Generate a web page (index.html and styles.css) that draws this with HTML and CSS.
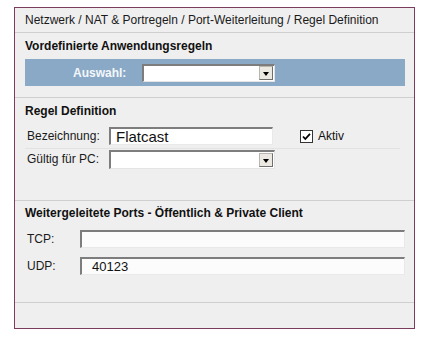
FILE: index.html
```html
<!DOCTYPE html>
<html lang="de">
<head>
    <meta charset="UTF-8">
    <link rel="stylesheet" href="styles.css">
    <title>Regel Definition</title>
</head>
<body>

    <div class="panel">
        <div class="crumb">Netzwerk / NAT &amp; Portregeln / Port-Weiterleitung / Regel Definition</div>

        <div class="section sec-preset">
            <h3>Vordefinierte Anwendungsregeln</h3>
            <div class="bar">
                <span class="bar-label">Auswahl:</span>
                <div class="select sel-preset"><span class="arrow"></span></div>
            </div>
        </div>

        <div class="section sec-rule">
            <h3>Regel Definition</h3>
            <div class="row row-name">
                <label class="lbl">Bezeichnung:</label>
                <div class="field field-name"><span class="val-big">Flatcast</span></div>
                <span class="check">
                    <svg width="11" height="11" viewBox="0 0 11 11"><path d="M2 5.5 L4.3 8 L9 2.8" fill="none" stroke="#000" stroke-width="1.8"/></svg>
                </span>
                <span class="check-label">Aktiv</span>
            </div>
            <div class="row">
                <label class="lbl">Gültig für PC:</label>
                <div class="select sel-pc"><span class="arrow"></span></div>
            </div>
        </div>

        <div class="section sec-ports">
            <h3>Weitergeleitete Ports - Öffentlich &amp; Private Client</h3>
            <div class="row row-port">
                <label class="lbl lbl-port">TCP:</label>
                <div class="field field-port"></div>
            </div>
            <div class="row row-port">
                <label class="lbl lbl-port">UDP:</label>
                <div class="field field-port field-udp"><span class="val">40123</span></div>
            </div>
        </div>

        <div class="section sec-end"></div>
    </div>

</body>
</html>
```

FILE: styles.css
```css
body {
    margin: 0;
    background-color: #fff;
    font-family: 'Liberation Sans', Arial, sans-serif;
    font-size: 12px;
    color: #111;
}

.panel {
    width: 399px;
    height: 320px;
    margin: 7px 0 0 14px;
    border: 1px solid #7b3c5e;
    background-color: #efefef;
}

.crumb {
    height: 24px;
    line-height: 24px;
    padding-left: 10px;
    border-bottom: 1px solid #cfcfcf;
    color: #1a1a1a;
}

.section {
    padding: 0 9px 0 10px;
    border-bottom: 1px solid #cfcfcf;
}

h3 {
    margin: 0;
    font-size: 12px;
    line-height: 14px;
    font-weight: bold;
}

.sec-preset {
    padding-top: 6px;
    padding-bottom: 11px;
}

.sec-preset h3 {
    margin-bottom: 6px;
}

.bar {
    height: 27px;
    background-color: #89a9c6;
    display: flex;
    align-items: center;
}

.bar-label {
    flex-shrink: 0;
    width: 117px;
    padding-left: 48px;
    box-sizing: border-box;
    font-weight: bold;
    color: #f4f7fa;
}

.select {
    flex-shrink: 0;
    height: 18px;
    box-sizing: border-box;
    background-color: #fff;
    border-top: 2px solid #7d7d7d;
    border-left: 2px solid #7d7d7d;
    border-right: 1px solid #e4e4e4;
    border-bottom: 1px solid #e4e4e4;
    display: flex;
    justify-content: flex-end;
    align-items: center;
    padding-right: 1px;
}

.sel-preset {
    width: 133px;
}

.sel-pc {
    width: 166px;
    height: 19px;
}

.arrow {
    width: 14px;
    height: 14px;
    box-sizing: border-box;
    background-color: #ebe9e2;
    border: 1px solid #b9b6ad;
    border-right-color: #6f6f6f;
    border-bottom-color: #6f6f6f;
    position: relative;
}

.arrow::after {
    content: "";
    position: absolute;
    left: 3px;
    top: 5px;
    border-left: 3.5px solid transparent;
    border-right: 3.5px solid transparent;
    border-top: 4px solid #000;
}

.sec-rule {
    padding-top: 6px;
    padding-bottom: 31px;
}

.row {
    display: flex;
    align-items: center;
    height: 20px;
}

.row-name {
    height: 24px;
    margin-top: 6px;
    border-bottom: 1px solid #e2e2e2;
    margin-right: 5px;
}

.lbl {
    flex-shrink: 0;
    width: 84px;
    padding-left: 2px;
    box-sizing: border-box;
    color: #1a1a1a;
}

.field {
    flex-shrink: 0;
    height: 18px;
    box-sizing: border-box;
    background-color: #fff;
    border-top: 2px solid #7d7d7d;
    border-left: 2px solid #7d7d7d;
    border-right: 1px solid #e9e9e9;
    border-bottom: 1px solid #e9e9e9;
    display: flex;
    align-items: center;
}

.field-name {
    width: 164px;
}

.val-big {
    font-size: 15px;
    padding-left: 5px;
    color: #111;
}

.check {
    flex-shrink: 0;
    width: 11px;
    height: 11px;
    margin-left: 27px;
    border: 1px solid #333;
    background-color: #fff;
    display: flex;
}

.check-label {
    margin-left: 5px;
}

.sec-ports {
    padding-top: 5px;
    padding-bottom: 26px;
}

.row-port {
    margin-top: 9px;
}

.row-port + .row-port {
    margin-top: 7px;
}

.lbl-port {
    width: 55px;
}

.field-port {
    flex: 1;
    background-color: #fcfcfc;
}

.val {
    padding-left: 10px;
    font-size: 13px;
}

.sec-end {
    border-bottom: none;
}
```
